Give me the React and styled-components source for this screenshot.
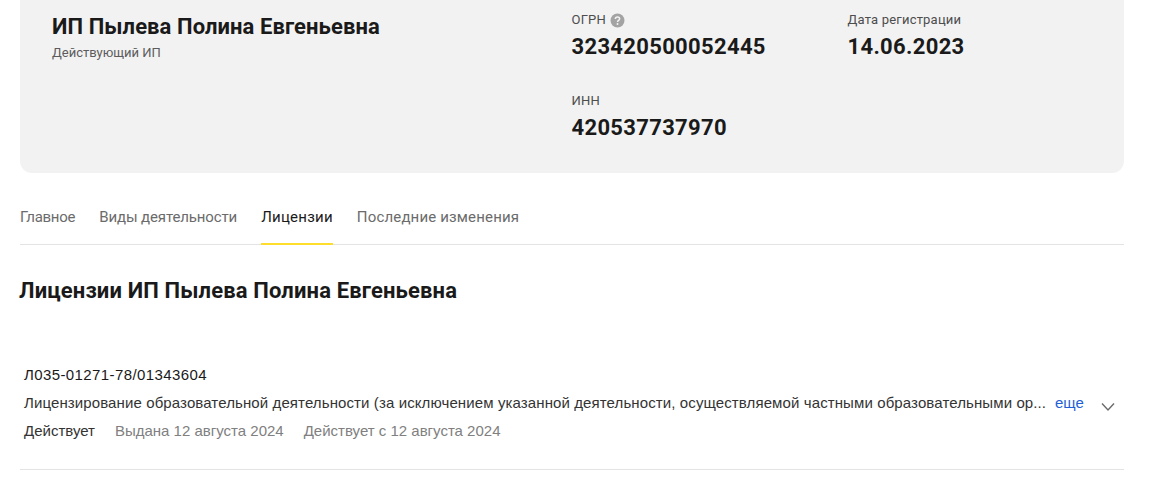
import React from "react";
import styled, { createGlobalStyle } from "styled-components";

const Global = createGlobalStyle`
  html, body { margin: 0; padding: 0; background: #fff; overflow: hidden; }
  body { font-family: Roboto, "Liberation Sans", sans-serif; color: #1a1a1a; }
`;

const Page = styled.div`
  width: 1104px;
  margin-left: 20px;
  height: 497px;
`;

const Card = styled.section`
  height: 173px;
  background: #f2f2f2;
  border-radius: 0 0 12px 12px;
  display: grid;
  grid-template-columns: 519.5px 276px 1fr;
  grid-template-rows: 81px 1fr;
  padding: 12px 0 0 32px;
  box-sizing: border-box;
`;

const Lead = styled.div`
  grid-row: 1 / 3;
`;

const Name = styled.h1`
  margin: 2px 0 0;
  font-size: 22px;
  line-height: 26px;
  font-weight: 700;
  letter-spacing: 0.08px;
  color: #1a1a1a;
`;

const Status = styled.div`
  margin-top: 5px;
  font-size: 13px;
  line-height: 16px;
  color: #5c5c5c;
`;

const Fact = styled.div`
  display: flex;
  flex-direction: column;
`;

const FactLabel = styled.div`
  display: flex;
  align-items: center;
  gap: 4px;
  font-size: 13px;
  line-height: 16px;
  letter-spacing: 0.2px;
  color: #4d4d4d;
`;

const FactValue = styled.div`
  margin-top: 5px;
  font-size: 22px;
  line-height: 28px;
  font-weight: 700;
  letter-spacing: 0.33px;
  color: #1a1a1a;
`;

const Tabs = styled.nav`
  display: flex;
  gap: 24px;
  height: 71px;
  border-bottom: 1px solid #e3e3e3;
`;

const Tab = styled.a`
  display: flex;
  align-items: flex-end;
  padding-bottom: 16px;
  box-sizing: border-box;
  height: 72px;
  font-size: 15px;
  line-height: 20px;
  letter-spacing: ${(p) => p.$track || 0}px;
  color: ${(p) => (p.$active ? "#1a1a1a" : "#6b6b6b")};
  border-bottom: 2px solid ${(p) => (p.$active ? "#ffdd2d" : "transparent")};
`;

const Heading = styled.h2`
  margin: 33px 0 0 -1px;
  font-size: 22px;
  line-height: 26px;
  font-weight: 700;
  letter-spacing: 0.14px;
  color: #1a1a1a;
`;

const License = styled.article`
  margin-top: 57px;
  padding: 0 4px;
  height: 109px;
  box-sizing: border-box;
  border-bottom: 1px solid #e3e3e3;
  position: relative;
  font-family: "Liberation Sans", Arial, sans-serif;
`;

const LicenseNumber = styled.div`
  font-size: 15px;
  line-height: 28px;
  letter-spacing: 0.4px;
  color: #1a1a1a;
`;

const DescRow = styled.div`
  display: flex;
  gap: 8px;
  font-size: 15px;
  line-height: 28px;
  color: #333;
`;

const Desc = styled.span`
  width: 1023px;
  flex: none;
  white-space: nowrap;
  letter-spacing: 0.11px;
`;

const More = styled.a`
  color: #1f5fd6;
`;

const Meta = styled.div`
  display: flex;
  gap: 20px;
  font-size: 15px;
  line-height: 28px;
  color: #808080;
`;

const MetaStrong = styled.span`
  color: #333;
`;

const Chevron = styled.svg`
  position: absolute;
  right: 8px;
  top: 38px;
  width: 16px;
  height: 16px;
  color: #6b6b6b;
`;

export default function App() {
  return (
    <Page>
      <Global />
      <Card>
        <Lead>
          <Name>ИП Пылева Полина Евгеньевна</Name>
          <Status>Действующий ИП</Status>
        </Lead>
        <Fact>
          <FactLabel>
            ОГРН
            <svg width="15" height="15" viewBox="0 0 14 14">
              <circle cx="7" cy="7" r="6.5" fill="#a3a3a3" />
              <path d="M5 5.6c0-1.2.9-1.9 2-1.9s2 .7 2 1.7c0 1.5-2 1.4-2 2.9" fill="none" stroke="#f2f2f2" strokeWidth="1.4" />
              <circle cx="7" cy="10.2" r=".9" fill="#f2f2f2" />
            </svg>
          </FactLabel>
          <FactValue>323420500052445</FactValue>
        </Fact>
        <Fact>
          <FactLabel>Дата регистрации</FactLabel>
          <FactValue>14.06.2023</FactValue>
        </Fact>
        <Fact>
          <FactLabel>ИНН</FactLabel>
          <FactValue>420537737970</FactValue>
        </Fact>
      </Card>
      <Tabs>
        <Tab $track={-0.28}>Главное</Tab>
        <Tab $track={-0.12}>Виды деятельности</Tab>
        <Tab $active $track={0.25}>Лицензии</Tab>
        <Tab $track={0.16}>Последние изменения</Tab>
      </Tabs>
      <Heading>Лицензии ИП Пылева Полина Евгеньевна</Heading>
      <License>
        <LicenseNumber>Л035-01271-78/01343604</LicenseNumber>
        <DescRow>
          <Desc>Лицензирование образовательной деятельности (за исключением указанной деятельности, осуществляемой частными образовательными ор...</Desc>
          <More>еще</More>
        </DescRow>
        <Meta>
          <MetaStrong>Действует</MetaStrong>
          <span>Выдана 12 августа 2024</span>
          <span>Действует с 12 августа 2024</span>
        </Meta>
        <Chevron viewBox="0 0 16 16" fill="none" stroke="currentColor" strokeWidth="1.4">
          <path d="M2 4.5l6 6.5 6-6.5" />
        </Chevron>
      </License>
    </Page>
  );
}
